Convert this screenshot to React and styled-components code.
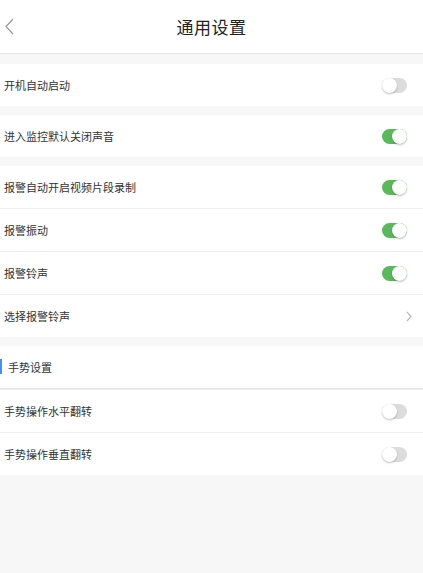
import React, { useState } from "react";
import styled, { createGlobalStyle } from "styled-components";

const GlobalStyle = createGlobalStyle`
  html, body {
    margin: 0;
    padding: 0;
    background: #f7f7f7;
    font-family: "Noto Sans CJK SC", "Liberation Sans", sans-serif;
  }
`;

const Page = styled.div`
  width: 423px;
  min-height: 573px;
  background: #f7f7f7;
`;

const Header = styled.header`
  position: relative;
  height: 53px;
  display: flex;
  align-items: center;
  justify-content: center;
  background: #fff;
  border-bottom: 1px solid #e8e8e8;
`;

const BackButton = styled.button`
  position: absolute;
  left: 4px;
  top: 18px;
  padding: 0;
  border: none;
  background: none;
  display: flex;
  cursor: pointer;
`;

const Title = styled.h1`
  margin: 0;
  font-size: 17px;
  font-weight: 400;
  color: #222;
  letter-spacing: 0.5px;
`;

const Group = styled.section`
  margin-top: ${(p) => p.$gap}px;
  background: #fff;
`;

const Row = styled.div`
  height: 42px;
  display: flex;
  align-items: center;
  justify-content: space-between;
  padding: 0 16px 0 4px;
  font-size: 11px;
  color: #333;
  & + & {
    border-top: 1px solid #eeeeee;
  }
`;

const SectionTitle = styled(Row)`
  position: relative;
  padding-left: 8px;
  border-bottom: 1px solid #e6e6e6;
  &::before {
    content: "";
    position: absolute;
    left: 0;
    top: 13px;
    width: 2px;
    height: 15px;
    background: #4a90e2;
  }
`;

const Label = styled.span`
  line-height: 1;
`;

const Track = styled.button`
  position: relative;
  width: 25px;
  height: 15px;
  padding: 0;
  border: none;
  border-radius: 8px;
  background: ${(p) => (p.$on ? "#5cb85c" : "#dcdcdc")};
  cursor: pointer;
`;

const Knob = styled.span`
  position: absolute;
  top: 0;
  left: ${(p) => (p.$on ? "10px" : "0")};
  width: 15px;
  height: 15px;
  border-radius: 50%;
  background: #fff;
  box-shadow: 0 1px 2px rgba(0, 0, 0, 0.25);
`;

const Toggle = ({ initial }) => {
  const [on, setOn] = useState(initial);
  return (
    <Track $on={on} onClick={() => setOn(!on)}>
      <Knob $on={on} />
    </Track>
  );
};

const Chevron = ({ dir }) => (
  <svg
    width={dir === "left" ? 10 : 6}
    height={dir === "left" ? 17 : 11}
    viewBox={dir === "left" ? "0 0 10 17" : "0 0 6 11"}
    fill="none"
    stroke={dir === "left" ? "#999" : "#bbb"}
    strokeWidth="1.2"
  >
    {dir === "left" ? (
      <polyline points="9,1 2,8.5 9,16" />
    ) : (
      <polyline points="1,1 5,5.5 1,10" />
    )}
  </svg>
);

const ChevronCell = styled.span`
  display: flex;
  margin-right: -5px;
`;

export default function App() {
  return (
    <Page>
      <GlobalStyle />
      <Header>
        <BackButton>
          <Chevron dir="left" />
        </BackButton>
        <Title>通用设置</Title>
      </Header>

      <Group $gap={10}>
        <Row>
          <Label>开机自动启动</Label>
          <Toggle initial={false} />
        </Row>
      </Group>

      <Group $gap={9}>
        <Row>
          <Label>进入监控默认关闭声音</Label>
          <Toggle initial={true} />
        </Row>
      </Group>

      <Group $gap={9}>
        <Row>
          <Label>报警自动开启视频片段录制</Label>
          <Toggle initial={true} />
        </Row>
        <Row>
          <Label>报警振动</Label>
          <Toggle initial={true} />
        </Row>
        <Row>
          <Label>报警铃声</Label>
          <Toggle initial={true} />
        </Row>
        <Row>
          <Label>选择报警铃声</Label>
          <ChevronCell>
            <Chevron dir="right" />
          </ChevronCell>
        </Row>
      </Group>

      <Group $gap={9}>
        <SectionTitle>
          <Label>手势设置</Label>
        </SectionTitle>
        <Row>
          <Label>手势操作水平翻转</Label>
          <Toggle initial={false} />
        </Row>
        <Row>
          <Label>手势操作垂直翻转</Label>
          <Toggle initial={false} />
        </Row>
      </Group>
    </Page>
  );
}
